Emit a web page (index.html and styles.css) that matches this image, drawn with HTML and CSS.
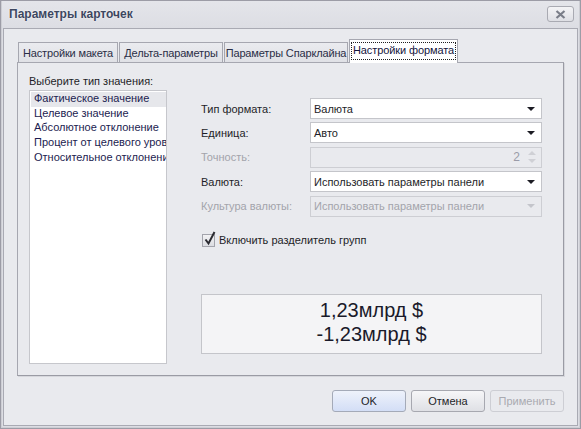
FILE: index.html
```html
<!DOCTYPE html>
<html>
<head>
<meta charset="utf-8">
<link rel="stylesheet" href="styles.css">
</head>
<body>
<div class="window">
  <div class="titlebar">
    <span class="title">Параметры карточек</span>
    <span class="close"><svg width="11" height="9" viewBox="0 0 11 9"><path d="M1.5 1 L9.5 8 M9.5 1 L1.5 8" stroke="#7a7d88" stroke-width="2.2"/></svg></span>
  </div>
  <div class="client">
    <div class="tabs">
      <div class="tab">Настройки макета</div>
      <div class="tab">Дельта-параметры</div>
      <div class="tab">Параметры Спарклайна</div>
      <div class="tab active"><span class="focus">Настройки формата</span></div>
    </div>
    <div class="page">
      <div class="leftcol">
        <div class="caption">Выберите тип значения:</div>
        <div class="list">
          <div class="item selected">Фактическое значение</div>
          <div class="item">Целевое значение</div>
          <div class="item">Абсолютное отклонение</div>
          <div class="item">Процент от целевого уровня</div>
          <div class="item">Относительное отклонение</div>
        </div>
      </div>
      <div class="rightcol">
        <div class="row">
          <span class="label">Тип формата:</span>
          <div class="combo"><span>Валюта</span><span class="arrow"></span></div>
        </div>
        <div class="row">
          <span class="label">Единица:</span>
          <div class="combo"><span>Авто</span><span class="arrow"></span></div>
        </div>
        <div class="row disabled">
          <span class="label">Точность:</span>
          <div class="combo spin"><span class="num">2</span><span class="spinbtns"><span class="up"></span><span class="down"></span></span></div>
        </div>
        <div class="row">
          <span class="label">Валюта:</span>
          <div class="combo"><span>Использовать параметры панели</span><span class="arrow"></span></div>
        </div>
        <div class="row disabled">
          <span class="label">Культура валюты:</span>
          <div class="combo"><span>Использовать параметры панели</span><span class="arrow"></span></div>
        </div>
        <div class="check">
          <span class="box"><svg width="13" height="15" viewBox="0 0 13 15"><path d="M2.5 8.5 L5.5 12.5 L11.5 1" fill="none" stroke="#2a2a30" stroke-width="2"/></svg></span>
          <span>Включить разделитель групп</span>
        </div>
        <div class="preview">
          <div>1,23млрд $</div>
          <div>-1,23млрд $</div>
        </div>
      </div>
    </div>
    <div class="buttons">
      <div class="btn ok">OK</div>
      <div class="btn">Отмена</div>
      <div class="btn dis">Применить</div>
    </div>
  </div>
</div>
</body>
</html>
```

FILE: styles.css
```css
html, body {
  margin: 0;
  padding: 0;
  background: #e3e4e9;
}
body {
  font-family: "Liberation Sans", Arial, sans-serif;
  font-size: 11px;
  color: #1e1e28;
}
.window {
  width: 581px;
  height: 429px;
  box-sizing: border-box;
  border: 1px solid #9c9ca6;
  background: linear-gradient(#e4e5ea, #dcdde3 28px, #dcdde3);
  display: flex;
  flex-direction: column;
  padding: 0 2px 2px 2px;
  box-shadow: inset 1px 0 0 #cdced4, inset -1px 0 0 #cdced4, inset 0 -1px 0 #cdced4;
}
.titlebar {
  height: 27px;
  display: flex;
  align-items: center;
  justify-content: space-between;
  padding: 0 4px 0 6px;
}
.title {
  font-weight: bold;
  font-size: 12px;
  color: #3d4760;
  text-shadow: 0 0 2px #ffffff;
  margin-top: -1px;
}
.close {
  width: 25px;
  height: 14px;
  border: 1px solid #a9aab2;
  border-radius: 3px;
  background: linear-gradient(#f4f4f6, #dedfe4);
  display: flex;
  align-items: center;
  justify-content: center;
  margin-top: -1px;
}
.client {
  flex: 1;
  border: 1px solid #a9aab3;
  background: #e9eaee;
  display: flex;
  flex-direction: column;
  padding: 9px 13px 0 13px;
}
.tabs {
  display: flex;
  align-items: flex-end;
  height: 24px;
  padding-left: 1px;
  gap: 1px;
  position: relative;
  z-index: 1;
}
.tab {
  height: 20px;
  box-sizing: border-box;
  border: 1px solid #a6a7b0;
  border-bottom: none;
  background: linear-gradient(#eaebef, #e0e1e6);
  padding: 0;
  display: flex;
  align-items: center;
  justify-content: center;
  color: #2a2e46;
  white-space: nowrap;
  letter-spacing: -0.15px;
}
.tab:nth-child(1) { width: 100px; }
.tab:nth-child(2) { width: 104px; }
.tab:nth-child(3) { width: 124px; }
.tab.active {
  height: 24px;
  width: 109px;
  background: #ffffff;
  margin-bottom: -1px;
  border-color: #a6a7b0;
  color: #14143c;
  letter-spacing: -0.1px;
  padding-bottom: 1px;
}
.focus {
  outline: 1px dotted #202020;
  padding: 1px 1px 2px 1px;
  line-height: 13px;
}
.page {
  height: 314px;
  box-sizing: border-box;
  border: 1px solid #a6a7b0;
  border-right-color: #9a9ba4;
  border-bottom-color: #9a9ba4;
  box-shadow: 1px 1px 0 #d6d7dc;
  background: #e9eaee;
  display: flex;
  padding: 12px 21px 11px 11px;
  gap: 34px;
}
.leftcol {
  display: flex;
  flex-direction: column;
  width: 138px;
}
.caption {
  height: 15px;
  line-height: 13px;
  color: #1e1e28;
}
.list {
  flex: 1;
  border: 1px solid #c6c7cc;
  background: #ffffff;
  padding: 1px 0 0 1px;
  overflow: hidden;
}
.item {
  height: 14.7px;
  line-height: 13px;
  padding-left: 3px;
  white-space: nowrap;
  overflow: hidden;
  color: #1c1c50;
}
.item.selected {
  background: #e6e7eb;
}
.rightcol {
  flex: 1;
  display: flex;
  flex-direction: column;
  padding-top: 23px;
}
.row {
  display: flex;
  align-items: center;
  height: 21px;
  margin-bottom: 3.4px;
}
.label {
  width: 109px;
  color: #1e1e28;
}
.combo {
  flex: 1;
  height: 21px;
  box-sizing: border-box;
  border: 1px solid #c4c5ca;
  background: #ffffff;
  display: flex;
  align-items: center;
  justify-content: space-between;
  padding: 0 5px 0 3px;
  color: #1e1e28;
}
.arrow {
  width: 0;
  height: 0;
  border-left: 4px solid transparent;
  border-right: 4px solid transparent;
  border-top: 4px solid #1c1c24;
  margin-right: 1px;
}
.row.disabled .label { color: #a3a4ab; }
.row.disabled .combo {
  background: #e9eaee;
  border-color: #cdced3;
  color: #a3a4ab;
}
.row.disabled .arrow { border-top-color: #c4c5cb; }
.combo.spin { justify-content: flex-end; padding-right: 3px; }
.num { margin-right: 8px; font-size: 12px; color: #9a9ba8; }
.spinbtns {
  display: flex;
  flex-direction: column;
  gap: 4px;
  margin-right: 2px;
}
.up {
  width: 0; height: 0;
  border-left: 4px solid transparent;
  border-right: 4px solid transparent;
  border-bottom: 4px solid #cfd0d5;
}
.down {
  width: 0; height: 0;
  border-left: 4px solid transparent;
  border-right: 4px solid transparent;
  border-top: 4px solid #cfd0d5;
}
.check {
  display: flex;
  align-items: center;
  margin-top: 12px;
  margin-left: 1px;
  height: 17px;
}
.box {
  width: 11px;
  height: 11px;
  border: 1px solid #a3a4ac;
  background: linear-gradient(#f2f2f4, #dcdde2);
  position: relative;
  margin-right: 4px;
}
.box svg {
  position: absolute;
  left: 0;
  top: -4px;
}
.preview {
  margin-top: 45px;
  height: 60px;
  box-sizing: border-box;
  border: 1px solid #c4c5ca;
  background: #f4f4f6;
  display: flex;
  flex-direction: column;
  align-items: center;
  justify-content: center;
  font-size: 20px;
  line-height: 24px;
  color: #1a1a2a;
  padding-bottom: 3px;
}
.buttons {
  display: flex;
  justify-content: flex-end;
  gap: 5px;
  margin-top: 14px;
}
.btn {
  width: 74px;
  height: 22px;
  box-sizing: border-box;
  border: 1px solid #a7a8b0;
  border-radius: 3px;
  background: linear-gradient(#f6f6f8, #dfe0e5);
  display: flex;
  align-items: center;
  justify-content: center;
  color: #1e1e28;
}
.btn.ok {
  border-color: #a4aab8;
  background: linear-gradient(#eef2fb, #d3def6);
}
.btn.dis {
  border-color: #cdced4;
  background: #e9eaee;
  color: #a9aab1;
}
```
